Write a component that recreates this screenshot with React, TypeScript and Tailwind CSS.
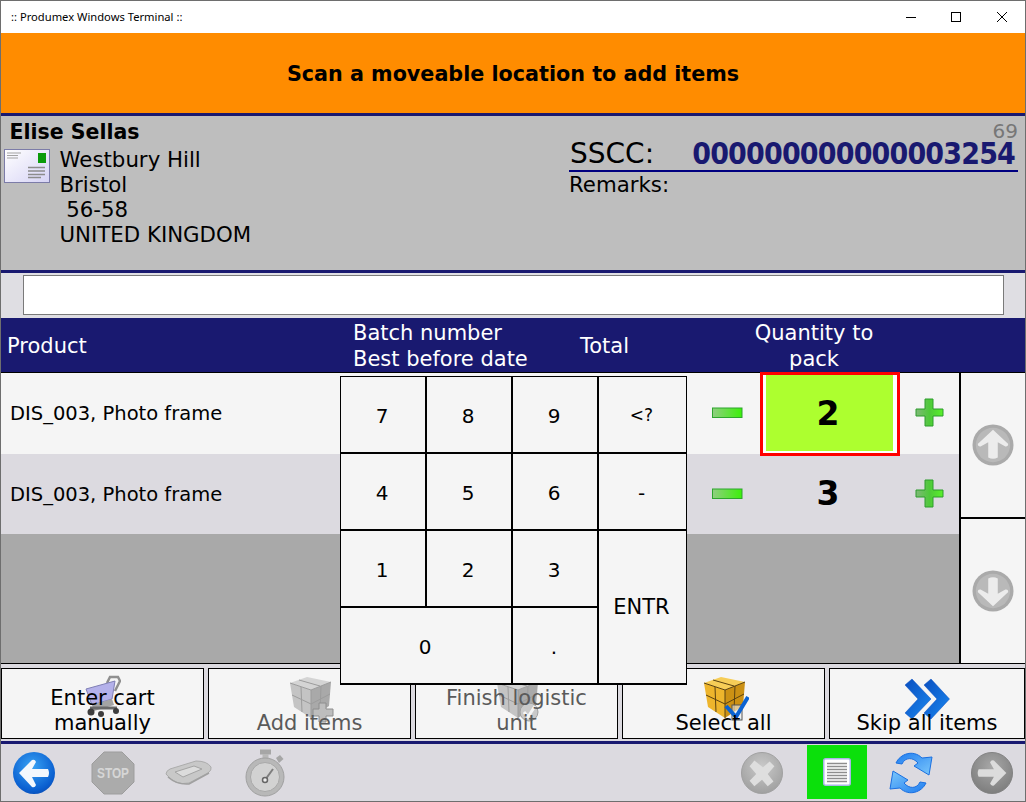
import type { ReactNode } from "react";

const font = "font-['DejaVu_Sans',Verdana,sans-serif]";

function Envelope() {
  return (
    <svg width="46" height="34" viewBox="0 0 46 34">
      <defs>
        <linearGradient id="env" x1="0" y1="0" x2="1" y2="1">
          <stop offset="0" stopColor="#ffffff" />
          <stop offset="1" stopColor="#d6d3f5" />
        </linearGradient>
      </defs>
      <rect x="0.5" y="0.5" width="45" height="33" fill="url(#env)" stroke="#7c7ca8" />
      <rect x="34" y="4" width="8" height="10" fill="#0a9a0a" />
      <path d="M3 4h14M3 6.500h11M3 9h11" stroke="#a3a3a3" />
      <path d="M24 18.500h17M24 22h17M24 25.500h17M24 28.500h13" stroke="#8c8c8c" strokeWidth="1.500" />
    </svg>
  );
}

function Minus() {
  return (
    <svg width="32" height="12" viewBox="0 0 32 12">
      <defs>
        <linearGradient id="minusFill" x1="0" y1="0" x2="1" y2="0">
          <stop offset="0" stopColor="#8fce80" />
          <stop offset="1" stopColor="#3cf00a" />
        </linearGradient>
      </defs>
      <rect x="0.500" y="1" width="29.500" height="9.500" fill="url(#minusFill)" stroke="#2da52d" />
    </svg>
  );
}

function Plus() {
  return (
    <svg width="30" height="30" viewBox="0 0 30 30">
      <defs>
        <linearGradient id="plusFill" x1="0" y1="0" x2="1" y2="0">
          <stop offset="0" stopColor="#7fb878" />
          <stop offset="0.5" stopColor="#4ec93a" />
          <stop offset="1" stopColor="#5af02a" />
        </linearGradient>
      </defs>
      <path d="M10 1h8v10h10v7H18v10h-8V18H1v-7h9z" fill="url(#plusFill)" stroke="#2c9c2c" />
    </svg>
  );
}

function SharedDefs() {
  return (
    <defs>
      <radialGradient id="greyDisc" cx="0.5" cy="0.35" r="0.75">
        <stop offset="0" stopColor="#c9c9c9" />
        <stop offset="1" stopColor="#9a9a9a" />
      </radialGradient>
      <radialGradient id="darkDisc" cx="0.5" cy="0.35" r="0.75">
        <stop offset="0" stopColor="#a8a8a8" />
        <stop offset="1" stopColor="#777777" />
      </radialGradient>
      <radialGradient id="blueDisc" cx="0.45" cy="0.35" r="0.8">
        <stop offset="0" stopColor="#3aa4f5" />
        <stop offset="0.7" stopColor="#0a5fd0" />
        <stop offset="1" stopColor="#0a3fa0" />
      </radialGradient>
      <linearGradient id="refreshFill" x1="0" y1="0" x2="1" y2="1">
        <stop offset="0" stopColor="#1f7cf0" />
        <stop offset="1" stopColor="#7cc8fb" />
      </linearGradient>
      <linearGradient id="chev" x1="0" y1="0" x2="1" y2="1">
        <stop offset="0" stopColor="#0a4fc0" />
        <stop offset="1" stopColor="#1a88f0" />
      </linearGradient>
    </defs>
  );
}

function ScrollUp() {
  return (
    <svg width="42" height="42" viewBox="0 0 44 44">
      <circle cx="22" cy="22" r="21.500" fill="#aaaaaa" />
      <circle cx="22" cy="22" r="18" fill="#b9b9b9" />
      <path d="M22 6 L38 21 Q38 24 35 23.500 L27 19 L27 35 Q22 38 17 35 L17 19 L9 23.500 Q6 24 6 21 Z" fill="#ececec" />
    </svg>
  );
}

function ScrollDown() {
  return (
    <svg width="42" height="42" viewBox="0 0 44 44">
      <circle cx="22" cy="22" r="21.500" fill="#aaaaaa" />
      <circle cx="22" cy="22" r="18" fill="#b9b9b9" />
      <path d="M22 38 L38 23 Q38 20 35 20.500 L27 25 L27 9 Q22 6 17 9 L17 25 L9 20.500 Q6 20 6 23 Z" fill="#ececec" />
    </svg>
  );
}

function Cart() {
  return (
    <svg width="36" height="42" viewBox="0 0 36 42">
      <path d="M22 8 L25 2 H33 L35 6 L30 16" fill="none" stroke="#8f8f8f" strokeWidth="2.500" />
      <path d="M1 14 L30 6 L27 24 L7 30 Z" fill="#b4b1ea" stroke="#7f7fb5" />
      <path d="M7 30 L27 24 L29 30 L9 36 Z" fill="#a4a4a4" />
      <path d="M5 33 H32" stroke="#6a6a6a" strokeWidth="3" />
      <circle cx="6" cy="37" r="3.500" fill="#3d3d3d" />
      <circle cx="16" cy="39" r="3" fill="#3d3d3d" />
      <circle cx="31" cy="36" r="3" fill="#3d3d3d" />
    </svg>
  );
}

function Cube({ tone, badge }: { tone: "grey" | "gold"; badge?: "plus" | "check" | "box" }) {
  const top = tone === "grey" ? "#d4d4d4" : "#f6cd57";
  const left = tone === "grey" ? "#c4c4c4" : "#eeb52c";
  const right = tone === "grey" ? "#a9a9a9" : "#cc9114";
  const line = tone === "grey" ? "#9c9c9c" : "#5b4210";
  return (
    <svg width="46" height="46" viewBox="0 0 46 46">
      <path d="M1 6 L18 0 L42 5 L22 13 Z" fill={top} />
      <path d="M1 6 L22 13 L22 41 L5 30 Z" fill={left} />
      <path d="M22 13 L42 5 L40 29 L22 41 Z" fill={right} />
      <path d="M1 6 L22 13 L42 5 M22 13 L22 41 M10 3 L31 9 M3 18 L22 27 L41 17 M12 10 L13 35 M32 9 L31 34" fill="none" stroke={line} />
      {badge === "plus" && <path d="M30 26h7v6h7v7h-7v6h-7v-6h-6v-7h6z" fill="#bdbdbd" stroke="#8e8e8e" />}
      {badge === "check" && (
        <>
          <circle cx="33" cy="35" r="9" fill="#c9c9c9" stroke="#a0a0a0" />
          <path d="M28 35 L32 40 L39 29" fill="none" stroke="#f5f5f5" strokeWidth="3" />
        </>
      )}
      {badge === "box" && (
        <>
          <rect x="29" y="28" width="10" height="15" fill="#eeeeee" fillOpacity="0.6" stroke="#555555" />
          <path d="M23 29 L33 40 L45 20" fill="none" stroke="#0a62d2" strokeWidth="4" />
        </>
      )}
    </svg>
  );
}

function ArrowsRight() {
  return (
    <svg width="46" height="42" viewBox="0 0 46 42">
      <path d="M1 7 L8 1 L27 21 L8 41 L1 35 L14 21 Z" fill="url(#chev)" stroke="#0a4fc0" strokeWidth="0.500" />
      <path d="M20 7 L27 1 L45.500 21 L27 41 L20 35 L33 21 Z" fill="url(#chev)" stroke="#0a4fc0" strokeWidth="0.500" />
    </svg>
  );
}

function Stop() {
  return (
    <svg width="44" height="44" viewBox="0 0 44 44">
      <path d="M13 1 H31 L43 13 V31 L31 43 H13 L1 31 V13 Z" fill="#ababab" stroke="#9d9d9d" />
      <text x="22" y="27" textAnchor="middle" fontSize="14" fontWeight="700" fill="#d6d6d6" fontFamily="Liberation Sans" textLength="32" lengthAdjust="spacingAndGlyphs">
        STOP
      </text>
    </svg>
  );
}

function Scanner() {
  return (
    <svg width="48" height="26" viewBox="0 0 48 26">
      <path d="M1 14 Q1 11 5 9 L31 1 Q42 1 46 7 Q47 10 43 13 L24 23 Q10 26 1 14 Z" fill="#c8c8c8" stroke="#acacac" />
      <path d="M10 12 L29 6 L37 9 L18 17 Z" fill="#dcdcdc" stroke="#a4a4a4" />
      <path d="M3 17 Q12 25 24 24 L44 13" fill="none" stroke="#a0a0a0" strokeWidth="1.500" />
    </svg>
  );
}

function Stopwatch() {
  return (
    <svg width="40" height="48" viewBox="0 0 40 48">
      <rect x="15" y="0.500" width="11" height="5" fill="#a6a6a6" />
      <rect x="17.500" y="5" width="6" height="5" fill="#b8b8b8" />
      <path d="M31 9 L35 6 L38.500 10 L34 14 Z" fill="#a6a6a6" />
      <circle cx="20" cy="28" r="19" fill="#b8b8b8" stroke="#a0a0a0" />
      <circle cx="20" cy="28" r="14.500" fill="#d2d2d2" stroke="#a8a8a8" />
      <path d="M20 31 L28 20" stroke="#7e7e7e" strokeWidth="2" />
      <circle cx="20" cy="31" r="2.500" fill="#eee" stroke="#666" strokeWidth="1.500" />
    </svg>
  );
}

function BackArrow() {
  return (
    <svg width="42" height="42" viewBox="0 0 42 42">
      <circle cx="21" cy="21" r="21" fill="url(#blueDisc)" />
      <path d="M6 21 L19 8 Q22 7 23 10 L19 17 H35 Q37 21 35 25 H19 L23 33 Q22 36 19 35 Z" fill="#f4f8fd" />
    </svg>
  );
}

function CancelDisc() {
  return (
    <svg width="42" height="42" viewBox="0 0 44 44">
      <circle cx="22" cy="22" r="21.500" fill="url(#greyDisc)" stroke="#a0a0a0" />
      <path d="M14 9 L23 16 L30 10 L35 15 L28 23 L34 31 L28 36 L22 29 L14 36 L9 30 L16 23 L9 15 Z" fill="#dedede" />
    </svg>
  );
}

function DocumentIcon() {
  return (
    <svg width="28" height="28" viewBox="0 0 28 28">
      <rect x="0.750" y="0.750" width="26.500" height="26.500" rx="2" fill="#ffffff" stroke="#a9b6e6" strokeWidth="1.500" />
      <path d="M4 5.500h20M4 8.500h20M4 11.500h20M4 14.500h20M4 17.500h20M4 20.500h20M4 23.500h20" stroke="#8e8e8e" strokeWidth="1.500" />
    </svg>
  );
}

function Refresh() {
  const arc = "M7 12 C11 3 24 -2 33 7 L43 6 L40 24 L25 15 L29 12 C24 6 16 6 13 13 Z";
  return (
    <svg width="44" height="44" viewBox="0 0 44 44" className="overflow-visible">
      <path d={arc} fill="url(#refreshFill)" stroke="#1a6fe0" />
      <path d={arc} transform="rotate(180 22 22)" fill="url(#refreshFill)" stroke="#1a6fe0" />
    </svg>
  );
}

function ForwardDisc() {
  return (
    <svg width="42" height="42" viewBox="0 0 44 44">
      <circle cx="22" cy="22" r="21.500" fill="url(#darkDisc)" stroke="#808080" />
      <path d="M37 22 L24 9 Q21 8 20 11 L24 18 H8 Q6 22 8 26 H24 L20 33 Q21 36 24 35 Z" fill="#dcdcdc" />
    </svg>
  );
}

function ActionButton({ lines, icon, muted, className, iconClass }: { lines: string[]; icon: ReactNode; muted?: boolean; className: string; iconClass: string }) {
  return (
    <div className={`relative flex flex-col items-center justify-end border border-black bg-[#f5f5f5] pb-[2px] text-[21px] leading-[25px] ${muted ? "text-[#5a5a5a]" : "text-black"} ${className}`}>
      <div className={`absolute ${iconClass}`}>{icon}</div>
      {lines.map((l) => (
        <span key={l} className="relative">
          {l}
        </span>
      ))}
    </div>
  );
}

function ProductRow({ qty, active }: { qty: string; active?: boolean }) {
  return (
    <div className={`flex h-[80.500px] items-center ${active ? "bg-[#f5f5f5]" : "bg-[#dcdae0]"}`}>
      <div className="w-[711px] pl-[9px] pt-[1px] text-[19.500px]">DIS_003, Photo frame</div>
      <Minus />
      <div className="relative ml-[16px] flex h-full w-[140px] items-center justify-center pr-[4px] text-[33px] font-bold">
        {active && (
          <div className="absolute inset-x-0 top-[-1px] bottom-[-2px] border-[3px] border-[#ff0000] bg-white px-[3px] pb-[2px]">
            <div className="h-full w-[127px] bg-[#adff2f]" />
          </div>
        )}
        <span className="relative">{qty}</span>
      </div>
      <div className="ml-[15px]">
        <Plus />
      </div>
    </div>
  );
}

function Keypad() {
  const cell = "flex items-center justify-center bg-[#f5f5f5] pr-[2px] pt-[2px] text-[20px]";
  return (
    <div className="absolute left-[339px] top-[375px] grid h-[309px] w-[347px] grid-cols-[84px_84px_84px_87px] grid-rows-[75px_75px_75px_75px] gap-[2px] border border-black bg-black">
      {["7", "8", "9"].map((k) => (
        <div key={k} className={cell}>
          {k}
        </div>
      ))}
      <div className={`${cell} !text-[17px]`}>&lt;?</div>
      {["4", "5", "6", "-", "1", "2", "3"].map((k) => (
        <div key={k} className={cell}>
          {k}
        </div>
      ))}
      <div className={`${cell} col-start-4 row-span-2 row-start-3 !text-[21px]`}>ENTR</div>
      <div className={`${cell} col-span-2`}>0</div>
      <div className={cell}>.</div>
    </div>
  );
}

export default function App() {
  return (
    <div className={`relative flex h-[802px] w-[1026px] flex-col overflow-hidden border border-[#6e6e6e] bg-[#dcdae0] text-black ${font}`}>
      <svg width="0" height="0" className="absolute">
        <SharedDefs />
      </svg>

      {/* title bar */}
      <div className="flex h-[32px] shrink-0 items-center bg-white pl-[10px] pr-[7px] font-['Noto_Sans',sans-serif] text-[11.200px]">
        <span>:: Produmex Windows Terminal ::</span>
        <div className="ml-auto flex items-center text-black">
          <svg width="12" height="12" viewBox="0 0 12 12">
            <path d="M1 6.500h10" stroke="#000" />
          </svg>
          <svg width="12" height="12" viewBox="0 0 12 12" className="ml-[33px]">
            <rect x="1.500" y="1.500" width="9" height="9" fill="none" stroke="#000" />
          </svg>
          <svg width="12" height="12" viewBox="0 0 12 12" className="ml-[34px] mr-[10px]">
            <path d="M1 1l10 10M11 1L1 11" stroke="#000" />
          </svg>
        </div>
      </div>

      {/* instruction banner */}
      <div className="flex h-[80px] shrink-0 items-center justify-center bg-[#ff8c00] pt-[3px] text-[20.700px] font-bold">
        Scan a moveable location to add items
      </div>

      {/* customer and logistic unit */}
      <div className="flex h-[160px] shrink-0 border-y-[3px] border-[#191970] bg-[#bebebe]">
        <div className="w-[568px] pl-[8.500px] pt-[3px]">
          <div className="text-[20.500px] font-bold leading-[27px]">Elise Sellas</div>
          <div className="flex">
            <div className="ml-[-5.500px] mt-[3px] shrink-0">
              <Envelope />
            </div>
            <div className="ml-[9.500px] mt-[1px] whitespace-pre text-[21.300px] leading-[25px]">
              {"Westbury Hill\nBristol\n 56-58\nUNITED KINGDOM"}
            </div>
          </div>
        </div>
        <div className="relative w-[449px] pt-[22px]">
          <div className="absolute right-0 top-[3px] text-[20px] leading-[24px] text-[#777777]">69</div>
          <div className="flex h-[34px] items-end justify-between border-b-2 border-[#000080] pl-[1px] pr-[3px]">
            <span className="text-[28px] leading-[32px]">SSCC:</span>
            <span className="text-[30px] font-bold leading-[32px] tracking-[-0.850px] text-[#191970] [font-stretch:condensed]">
              000000000000003254
            </span>
          </div>
          <div className="text-[21.300px] leading-[26px]">Remarks:</div>
        </div>
      </div>

      {/* scan input */}
      <div className="flex h-[45px] shrink-0 items-start bg-[#dfdee3] pl-[22px] pt-[2px]">
        <div className="h-[40px] w-[981px] border border-[#7a7a7a] bg-white" />
      </div>

      {/* table header */}
      <div className="flex h-[54px] shrink-0 items-center bg-[#191970] pt-[2px] text-[21px] leading-[26px] text-white">
        <div className="w-[352px] pl-[6px]">Product</div>
        <div className="w-[227px]">
          <div>Batch number</div>
          <div>Best before date</div>
        </div>
        <div className="w-[150px]">Total</div>
        <div className="w-[168px] text-center">
          Quantity to
          <br />
          pack
        </div>
      </div>

      {/* table body */}
      <div className="flex h-[292px] shrink-0 border-y border-black">
        <div className="w-[958px] bg-[#a9a9a9]">
          <ProductRow qty="2" active />
          <ProductRow qty="3" />
        </div>
        <div className="flex flex-1 flex-col border-l-2 border-black bg-[#f5f5f5]">
          <div className="flex flex-1 items-center justify-center border-b-2 border-black">
            <ScrollUp />
          </div>
          <div className="flex flex-1 items-center justify-center">
            <ScrollDown />
          </div>
        </div>
      </div>

      {/* actions */}
      <div className="flex h-[77px] shrink-0 gap-[4px] pb-[2px] pt-[4px]">
        <ActionButton className="w-[203px]" lines={["Enter cart", "manually"]} icon={<Cart />} iconClass="left-[83px] top-[6px]" />
        <ActionButton className="w-[203px]" lines={["Add items"]} muted icon={<Cube tone="grey" badge="plus" />} iconClass="left-[80px] top-[8px]" />
        <ActionButton className="w-[203px]" lines={["Finish logistic", "unit"]} muted icon={<Cube tone="grey" badge="check" />} iconClass="left-[80px] top-[8px]" />
        <ActionButton className="w-[203px]" lines={["Select all"]} icon={<Cube tone="gold" badge="box" />} iconClass="left-[80px] top-[8px]" />
        <ActionButton className="flex-1" lines={["Skip all items"]} icon={<ArrowsRight />} iconClass="left-[74px] top-[9px]" />
      </div>

      {/* bottom toolbar */}
      <div className="flex min-h-0 flex-1 items-center border-t-[3px] border-[#191970] pb-[2px] pl-[12px]">
        <div className="mt-[2px]">
          <BackArrow />
        </div>
        <div className="ml-[36px] mt-[2px]">
          <Stop />
        </div>
        <div className="ml-[30px] mt-[2px]">
          <Scanner />
        </div>
        <div className="ml-[32px] mt-[2px]">
          <Stopwatch />
        </div>
        <div className="ml-auto flex items-center pr-[12px]">
          <div className="mt-[2px]">
            <CancelDisc />
          </div>
          <div className="ml-[24px] flex h-[54px] w-[60px] items-center justify-center bg-[#0be00b]">
            <DocumentIcon />
          </div>
          <div className="ml-[22px] mt-[2px]">
            <Refresh />
          </div>
          <div className="ml-[38px] mt-[2px]">
            <ForwardDisc />
          </div>
        </div>
      </div>

      <Keypad />
    </div>
  );
}
